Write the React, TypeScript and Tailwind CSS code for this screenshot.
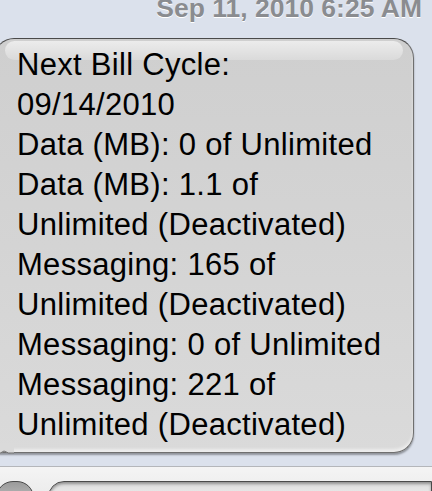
export default function App() {
  const lines = [
    "Next Bill Cycle:",
    "09/14/2010",
    "Data (MB): 0 of Unlimited",
    "Data (MB): 1.1 of",
    "Unlimited (Deactivated)",
    "Messaging: 165 of",
    "Unlimited (Deactivated)",
    "Messaging: 0 of Unlimited",
    "Messaging: 221 of",
    "Unlimited (Deactivated)",
  ];

  return (
    <div
      className="flex h-[491px] w-[432px] flex-col overflow-hidden bg-[#dbe1ec]"
      style={{ fontFamily: '"Liberation Sans", Arial, sans-serif' }}
    >
      {/* timestamp header */}
      <div className="mt-[-5px] pr-[10px] text-right text-[26.5px] font-bold leading-none text-[#8a8c90] [text-shadow:0_1px_0_#ffffff]">
        Sep 11, 2010 6:25 AM
      </div>

      {/* incoming bubble */}
      <div className="relative ml-[-6px] mt-[16px] w-[420px]">
        <div className="relative rounded-[20px] rounded-bl-[6px] border border-[#6f6f6f] border-t-[#4a4a4a] bg-gradient-to-b from-[#cfcfcf] via-[#d4d4d4] to-[#dadada] pb-[7px] pl-[22px] pt-[6px] shadow-[0_2px_2px_rgba(0,0,0,0.35),inset_0_-3px_3px_rgba(255,255,255,0.5)]">
          <div className="pointer-events-none absolute left-[10px] right-[10px] top-[2px] h-[19px] rounded-[14px] bg-gradient-to-b from-[#ececec] to-[#dadada]" />
          <div className="relative text-[31px] leading-[40px] tracking-[0.3px] text-black">
            {lines.map((l, i) => (
              <div key={i}>{l}</div>
            ))}
          </div>
        </div>
        <svg className="absolute bottom-[-3px] left-0" width="20" height="12" viewBox="0 0 20 12">
          <path d="M0 0 L0 9 Q6 11 10 7 Q14 10 20 9 L20 0 Z" fill="#dadada" />
          <path d="M0 9 Q6 11 10 7 Q14 10 20 9" fill="none" stroke="#6f6f6f" strokeWidth="1" />
        </svg>
      </div>

      {/* compose bar */}
      <div className="mt-[13px] flex flex-1 items-start gap-[14px] border-t border-[#b4b6ba] bg-gradient-to-b from-[#f4f4f4] to-[#e6e6e6] pt-[14px]">
        <div className="ml-[-4px] h-[34px] w-[38px] shrink-0 rounded-full border border-[#4a4a4a] bg-gradient-to-b from-[#9a9a9a] to-[#d8d8d8]" />
        <div className="h-[34px] flex-1 rounded-l-[16px] border border-[#4a4a4a] bg-gradient-to-b from-[#dcdcdc] to-white shadow-[inset_0_2px_3px_rgba(0,0,0,0.35)]" />
      </div>
    </div>
  );
}
